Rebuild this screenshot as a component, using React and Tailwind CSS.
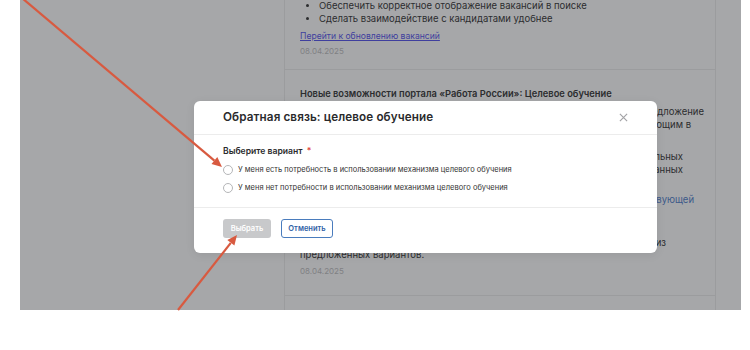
import React from "react";

const font = { fontFamily: "Inter, 'Open Sans', 'Noto Sans', sans-serif" };

/* ── background page (under the dimmed overlay) ── */
function Column() {
  return (
    <div className="w-[432px] h-full border-l border-r border-[#9b9c9e] flex flex-col text-[9.5px] text-[#2c2d2f]">
      <div className="pl-[15px] h-[71px] border-b border-[#9b9c9e] -mt-[1px]">
        <ul className="list-disc pl-[19px] leading-[13px]">
          <li>Обеспечить корректное отображение вакансий в поиске</li>
          <li>Сделать взаимодействие с кандидатами удобнее</li>
        </ul>
        <div className="mt-[5px] leading-[13px] underline text-[8.6px] text-[#3f3f9e]">Перейти к обновлению вакансий</div>
        <div className="mt-[2px] leading-[13px] text-[8px] text-[#7f8083]">08.04.2025</div>
      </div>

      <div className="pl-[15px] pt-[17px] leading-[13px] flex-1 border-b border-[#9b9c9e]">
        <div className="font-semibold text-[9.3px]">Новые возможности портала «Работа России»: Целевое обучение</div>
        <div className="mt-[5px]">
          <p className="w-[404px] text-right">работодателям удобное предложение</p>
          <p className="w-[391px] text-right">соответствующим в</p>
          <p>&nbsp;</p>
        </div>
        <div className="mt-[6px]">
          <p className="w-[383px] text-right">индивидуальных</p>
          <p className="w-[383px] text-right">персонализированных</p>
          <p>&nbsp;</p>
        </div>
        <div className="mt-[4px]">
          <p className="w-[394px] text-right text-[#3d5a8a]">соответствующей</p>
          <p>&nbsp;</p>
        </div>
        <div className="mt-[4px]">
          <p>&nbsp;</p>
          <p className="w-[366px] text-right">из</p>
          <p className="-mt-[1px]">предложенных вариантов.</p>
        </div>
        <div className="mt-[4px] text-[8px] text-[#7f8083]">08.04.2025</div>
      </div>
      <div className="h-[14px]" />
    </div>
  );
}

/* ── modal ── */
function Radio({ label }) {
  return (
    <label className="flex items-center gap-[5px] h-[18px]">
      <span className="w-[10px] h-[10px] rounded-full border border-[#b5b6b8] bg-white" />
      <span className="text-[7.5px] text-[#333]">{label}</span>
    </label>
  );
}

function Modal() {
  return (
    <div className="absolute left-[194px] top-[101px] w-[463px] h-[152px] bg-white rounded-[6px] flex flex-col shadow-[0_2px_10px_rgba(0,0,0,0.08)]">
      <div className="h-[34px] px-[29px] flex items-center justify-between border-b border-[#ececec]">
        <span className="text-[11.7px] font-semibold text-[#2a2a2c] tracking-[0.1px]">Обратная связь: целевое обучение</span>
        <svg width="9" height="9" viewBox="0 0 10 10">
          <path d="M1 1L9 9M9 1L1 9" stroke="#a3a3a6" strokeWidth="1.3" />
        </svg>
      </div>
      <div className="px-[29px] pt-[10px] h-[73px] border-b border-[#ececec]">
        <div className="text-[8.6px] font-semibold text-[#2a2a2c] leading-[13px]">
          Выберите вариант <span className="text-[#e0433a] ml-[2px]">*</span>
        </div>
        <div className="mt-[3px]">
          <Radio label="У меня есть потребность в использовании механизма целевого обучения" />
          <Radio label="У меня нет потребности в использовании механизма целевого обучения" />
        </div>
      </div>
      <div className="px-[29px] pt-[11px] flex gap-[10px]">
        <button className="w-[48px] h-[19px] rounded-[3px] bg-[#c8c9cb] text-white text-[7.5px] font-semibold">Выбрать</button>
        <button className="w-[52px] h-[19px] rounded-[3px] border border-[#4a7cbd] text-[#2f62a6] text-[7.5px] font-semibold">Отменить</button>
      </div>
    </div>
  );
}

function Arrows() {
  return (
    <svg className="absolute inset-0 pointer-events-none" width="750" height="350">
      <line x1="22" y1="-2" x2="214.4" y2="160.6" stroke="#d85a40" strokeWidth="2.2" />
      <polygon points="222,167 211.5,164 217.3,157.1" fill="#d85a40" />
      <line x1="178" y1="310" x2="230.8" y2="242.9" stroke="#d85a40" strokeWidth="2.2" />
      <polygon points="237,235 234.4,245.6 227.3,240.1" fill="#d85a40" />
    </svg>
  );
}

export default function App() {
  return (
    <div className="relative w-[750px] h-[350px] bg-white overflow-hidden" style={font}>
      <div className="ml-[20px] w-[721px] h-[310px] bg-[#a6a7a9] flex">
        <div className="w-[264px]" />
        <Column />
      </div>
      <Modal />
      <Arrows />
    </div>
  );
}
